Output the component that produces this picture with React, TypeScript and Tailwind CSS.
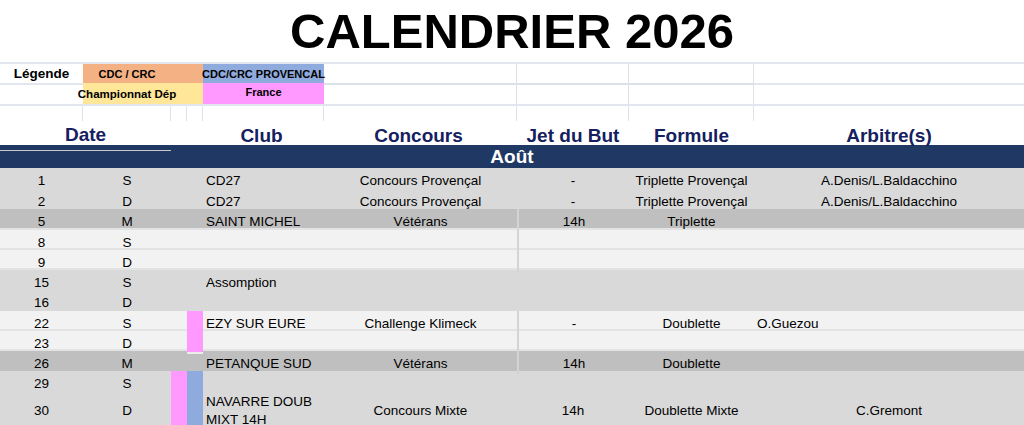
import React from "react";

const GRID = "grid grid-cols-[83px_88px_16px_16px_121px_193px_112px_125px_270px]";

type Row = {
  d: string;
  j: string;
  club?: string | string[];
  conc?: string;
  jet?: string;
  form?: string;
  arb?: string;
  arbLeft?: boolean;
  bg: string;
  h: string;
  c3?: string;
  c4?: string;
  line?: boolean;
  vline?: boolean;
  tall?: boolean;
};

const rows: Row[] = [
  { d: "1", j: "S", club: "CD27", conc: "Concours Provençal", jet: "-", form: "Triplette Provençal", arb: "A.Denis/L.Baldacchino", bg: "bg-[#d9d9d9]", h: "h-[21px]" },
  { d: "2", j: "D", club: "CD27", conc: "Concours Provençal", jet: "-", form: "Triplette Provençal", arb: "A.Denis/L.Baldacchino", bg: "bg-[#d9d9d9]", h: "h-[20px]" },
  { d: "5", j: "M", club: "SAINT MICHEL", conc: "Vétérans", jet: "14h", form: "Triplette", bg: "bg-[#bfbfbf]", h: "h-[21px]", line: true, vline: true },
  { d: "8", j: "S", bg: "bg-[#f2f2f2]", h: "h-[20px]", line: true, vline: true },
  { d: "9", j: "D", bg: "bg-[#f2f2f2]", h: "h-[20px]", line: true, vline: true },
  { d: "15", j: "S", club: "Assomption", bg: "bg-[#d9d9d9]", h: "h-[20px]" },
  { d: "16", j: "D", bg: "bg-[#d9d9d9]", h: "h-[21px]" },
  { d: "22", j: "S", c4: "bg-[#ff99ff]", club: "EZY SUR EURE", conc: "Challenge Klimeck", jet: "-", form: "Doublette", arb: "O.Guezou", arbLeft: true, bg: "bg-[#f2f2f2]", h: "h-[20px]", line: true, vline: true },
  { d: "23", j: "D", c4: "bg-[#ff99ff]", bg: "bg-[#f2f2f2]", h: "h-[20px]", line: true, vline: true },
  { d: "26", j: "M", club: "PETANQUE SUD", conc: "Vétérans", jet: "14h", form: "Doublette", bg: "bg-[#bfbfbf]", h: "h-[20px]", vline: true },
  { d: "29", j: "S", c3: "bg-[#ff99ff]", c4: "bg-[#8faadc]", bg: "bg-[#d9d9d9]", h: "h-[20px]" },
  { d: "30", j: "D", c3: "bg-[#ff99ff]", c4: "bg-[#8faadc]", club: ["NAVARRE DOUB", "MIXT 14H"], conc: "Concours Mixte", jet: "14h", form: "Doublette Mixte", arb: "C.Gremont", bg: "bg-[#d9d9d9]", h: "h-[40px]", tall: true },
];

function DataRow({ r, last }: { r: Row; last: boolean }) {
  const sep = r.line ? "border-b-2 border-[#e3e3e3]" : "";
  const cellSep = !last ? "border-b-2 border-[#ececec]" : "";
  const pt = r.tall ? "" : "pt-[3px]";
  return (
    <div className={`${GRID} ${r.bg} ${r.h} ${sep} text-[13.5px] text-black`}>
      <div className={`flex items-center justify-center ${pt}`}>{r.d}</div>
      <div className={`flex items-center justify-center ${pt}`}>{r.j}</div>
      <div className={`${r.c3 ?? ""} ${r.c3 ? cellSep : ""}`} />
      <div className={`${r.c4 ?? ""} ${r.c4 ? cellSep : ""}`} />
      <div className={`flex flex-col justify-center pl-[3px] whitespace-nowrap leading-[18px] ${pt}`}>
        {Array.isArray(r.club) ? r.club.map((c) => <span key={c}>{c}</span>) : r.club}
      </div>
      <div className={`flex items-center justify-center whitespace-nowrap ${pt}`}>{r.conc}</div>
      <div className={`flex items-center justify-center ${pt} ${r.vline ? "border-l-2 border-[#d4d4d4]" : ""}`}>{r.jet}</div>
      <div className={`flex items-center justify-center whitespace-nowrap ${pt}`}>{r.form}</div>
      <div className={`flex items-center whitespace-nowrap ${pt} ${r.arbLeft ? "justify-start pl-[3px]" : "justify-center"}`}>{r.arb}</div>
    </div>
  );
}

export default function App() {
  return (
    <div className="w-[1024px] h-[425px] overflow-hidden bg-white font-['Liberation_Sans',Arial,sans-serif]">
      {/* Title */}
      <div className="h-[62px] flex items-center justify-center">
        <h1 className="text-[49px] leading-none font-bold text-black">CALENDRIER 2026</h1>
      </div>

      {/* Legend row A */}
      <div className={`${GRID} h-[21px] border-t-2 border-[#e3e6ee] text-black font-bold`}>
        <div className="flex items-center justify-center text-[13.5px]">Légende</div>
        <div className="col-span-3 bg-[#f4b183] flex items-center">
          <div className="w-[88px] flex justify-center whitespace-nowrap text-[11px]">CDC / CRC</div>
        </div>
        <div className="bg-[#8faadc] flex items-center justify-center whitespace-nowrap text-[11px]">CDC/CRC PROVENCAL</div>
        <div className="border-r border-[#dde1ea]" />
        <div className="border-r border-[#dde1ea]" />
        <div className="border-r border-[#dde1ea]" />
        <div />
      </div>

      {/* Legend row B */}
      <div className={`${GRID} h-[21px] text-black font-bold`}>
        <div className="border-t-2 border-[#e3e6ee]" />
        <div className="col-span-3 bg-[#ffe699] flex items-center">
          <div className="w-[88px] flex justify-center whitespace-nowrap text-[11.5px] pt-[3px]">Championnat Dép</div>
        </div>
        <div className="bg-[#ff99ff] flex items-start justify-center whitespace-nowrap text-[11px] pt-[1px]">France</div>
        <div className="border-t-2 border-r border-[#dde1ea]" />
        <div className="border-t-2 border-r border-[#dde1ea]" />
        <div className="border-t-2 border-r border-[#dde1ea]" />
        <div className="border-t-2 border-[#e3e6ee]" />
      </div>

      {/* Legend row C */}
      <div className={`${GRID} h-[17px] border-t-2 border-[#e3e6ee]`}>
        <div className="border-r border-[#dde1ea]" />
        <div className="border-r border-[#dde1ea]" />
        <div className="border-r border-[#dde1ea]" />
        <div className="border-r border-[#dde1ea]" />
        <div className="border-r border-[#dde1ea]" />
        <div className="border-r border-[#dde1ea]" />
        <div className="border-r border-[#dde1ea]" />
        <div className="border-r border-[#dde1ea]" />
        <div />
      </div>

      {/* Header row */}
      <div className={`${GRID} h-[24px] text-[19px] font-bold text-[#142060]`}>
        <div className="col-span-2 flex items-center justify-center border-b border-[#c9c9c9]">Date</div>
        <div />
        <div />
        <div className="flex items-center justify-center pr-[4px]">Club</div>
        <div className="flex items-center justify-center pr-[4px]">Concours</div>
        <div className="flex items-center justify-center">Jet du But</div>
        <div className="flex items-center justify-center">Formule</div>
        <div className="flex items-center justify-center">Arbitre(s)</div>
      </div>

      {/* Month band */}
      <div className="h-[23px] bg-[#203864] flex items-center justify-center pt-[2px] text-white text-[19px] font-bold">
        Août
      </div>

      {rows.map((r, i) => (
        <DataRow key={r.d} r={r} last={i === rows.length - 1} />
      ))}
    </div>
  );
}
